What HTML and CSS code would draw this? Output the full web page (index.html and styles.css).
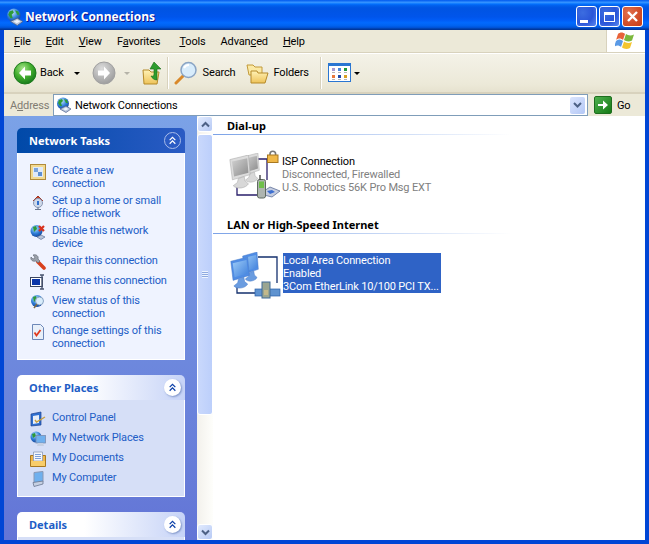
FILE: index.html
```html
<!DOCTYPE html>
<html lang="en">
<head>
  <meta charset="UTF-8">
  <title>Network Connections</title>
  <link rel="stylesheet" href="styles.css">
</head>
<body>
  <svg class="defs" width="0" height="0">
    <defs>
      <radialGradient id="gGreen" cx="40%" cy="30%" r="75%"><stop offset="0" stop-color="#a6e58a"/><stop offset=".5" stop-color="#45b02f"/><stop offset="1" stop-color="#13761a"/></radialGradient>
      <radialGradient id="gGrey" cx="40%" cy="30%" r="75%"><stop offset="0" stop-color="#dcdcdc"/><stop offset="1" stop-color="#9a9a9a"/></radialGradient>
      <radialGradient id="gGlobe" cx="40%" cy="30%" r="75%"><stop offset="0" stop-color="#bfe3ff"/><stop offset=".55" stop-color="#2f7fd8"/><stop offset="1" stop-color="#123f95"/></radialGradient>
      <linearGradient id="gFolder" x1="0" y1="0" x2="0" y2="1"><stop offset="0" stop-color="#fff2b5"/><stop offset="1" stop-color="#eec35a"/></linearGradient>
      <linearGradient id="gScreenBlue" x1="0" y1="0" x2="1" y2="1"><stop offset="0" stop-color="#9ccbf7"/><stop offset="1" stop-color="#3f80dc"/></linearGradient>
      <linearGradient id="gScreenGrey" x1="0" y1="0" x2="1" y2="1"><stop offset="0" stop-color="#d2d2d2"/><stop offset="1" stop-color="#8c8c8c"/></linearGradient>
      <symbol id="netGlobe" viewBox="0 0 16 16">
        <circle cx="7" cy="6.500" r="6" fill="url(#gGlobe)"/>
        <path d="M3 3l3-1 1 2-2 2 1 3-2 0-2-3z M8 2l3 1 1 3-2 0-1-2z" fill="#2d9a38"/>
        <path d="M4 12l6-3 5 3-5 3.500z" fill="#b9c6dc" stroke="#4a5f8c" stroke-width=".7"/>
        <path d="M7 12l3-1.500 2.500 1.500-3 1.500z" fill="#eef3fb"/>
      </symbol>
      <symbol id="monitorGrey" viewBox="0 0 26 26" preserveAspectRatio="none">
        <path d="M1 3.500L23 0l2 15-21 4z" fill="#dcdcdc" stroke="#a8a8a8" stroke-width=".5"/>
        <path d="M3.500 5L21.500 2.500 23 13.500 6 16.500z" fill="url(#gScreenGrey)"/>
        <path d="M11 18l7-1.500 1 3.500 4 2c-3 3.500-14 4.500-18 1.500l5-2.500z" fill="#d8d8d8" stroke="#a8a8a8" stroke-width=".5"/>
      </symbol>
      <symbol id="monitorBlue" viewBox="0 0 26 26" preserveAspectRatio="none">
        <path d="M1 3.500L23 0l2 15-21 4z" fill="#4f8ce4" stroke="#4a7cc8" stroke-width=".5"/>
        <path d="M3.500 5L21.500 2.500 23 13.500 6 16.500z" fill="url(#gScreenBlue)"/>
        <path d="M11 18l7-1.500 1 3.500 4 2c-3 3.500-14 4.500-18 1.500l5-2.500z" fill="#6a9ce0" stroke="#4a7cc8" stroke-width=".5"/>
      </symbol>
      <symbol id="chevrons" viewBox="0 0 16 16">
        <path d="M4.500 7.500L8 4l3.500 3.500M4.500 12L8 8.500l3.500 3.500" fill="none" stroke="currentColor" stroke-width="1.500"/>
      </symbol>
    </defs>
  </svg>

  <div class="window">
    <header class="titlebar">
      <svg class="title-icon" width="18" height="18"><use href="#netGlobe"/></svg>
      <span class="title-text">Network Connections</span>
      <div class="caption-btns">
        <button class="cap cap-min"><span class="min-bar"></span></button>
        <button class="cap cap-max"><span class="max-box"></span></button>
        <button class="cap cap-close">
          <svg width="13" height="13" viewBox="0 0 13 13"><path d="M2 2l9 9M11 2l-9 9" stroke="#fff" stroke-width="2.400"/></svg>
        </button>
      </div>
    </header>

    <div class="frame">
      <nav class="menubar">
        <div class="menu-items">
          <span><u>F</u>ile</span>
          <span><u>E</u>dit</span>
          <span><u>V</u>iew</span>
          <span class="menu-fav">F<u>a</u>vorites</span>
          <span><u>T</u>ools</span>
          <span>Advan<u>c</u>ed</span>
          <span><u>H</u>elp</span>
        </div>
        <div class="logo-box">
          <svg width="22" height="20" viewBox="0 0 22 20">
            <path d="M3 3c2-2 5-2 7 0l-2 6c-2-2-5-2-7 0z" fill="#e8633a"/>
            <path d="M11 3c2 1.500 5 2 8 .5l-2 6c-3 1.500-6 1-8-.5z" fill="#7cb83c"/>
            <path d="M1 10c2-2 4-2 7 0l-2 6c-2-2-5-2-7 0z" fill="#5a9ae6"/>
            <path d="M9 10.500c2 1.500 5 2 8 .5l-2 6c-3 1.500-6 1-8-.5z" fill="#f5c52e"/>
          </svg>
        </div>
      </nav>

      <div class="toolbar">
        <svg class="tb-round" width="24" height="24" viewBox="0 0 24 24">
          <circle cx="12" cy="12" r="11" fill="url(#gGreen)" stroke="#1c7a1c"/>
          <path d="M12 5.500L6 12l6 6.500v-4h6v-5h-6z" fill="#fff"/>
        </svg>
        <span class="tb-label back-label">Back</span>
        <span class="caret back-caret"></span>
        <svg class="tb-round fwd" width="24" height="24" viewBox="0 0 24 24">
          <circle cx="12" cy="12" r="11" fill="url(#gGrey)" stroke="#a0a0a0"/>
          <path d="M12 5.500l6 6.500-6 6.500v-4H6v-5h6z" fill="#fff"/>
        </svg>
        <span class="caret caret-off fwd-caret"></span>
        <svg class="up-icon" width="22" height="24" viewBox="0 0 22 24">
          <path d="M1 9h6l2 2h8l-2 12H2z" fill="url(#gFolder)" stroke="#b58a2a"/>
          <path d="M12 1l7 7h-4v11c-3 0-5-2-6-4 2 .5 3 0 3-2V8H8z" fill="#2e9c2e" stroke="#1a6d1a" stroke-width=".6"/>
        </svg>
        <span class="tb-sep sep-a"></span>
        <svg class="search-icon" width="24" height="24" viewBox="0 0 24 24">
          <path d="M9 15l-7 7" stroke="#d9892a" stroke-width="3" stroke-linecap="round"/>
          <circle cx="14.500" cy="9" r="7.500" fill="#d8ecfb" stroke="#8aa4c4" stroke-width="1.500"/>
          <path d="M10 7c1-2 3-3 5-3" stroke="#fff" stroke-width="2" fill="none"/>
        </svg>
        <span class="tb-label search-label">Search</span>
        <svg class="folders-icon" width="23" height="22" viewBox="0 0 23 22">
          <path d="M1 3h6l2 2h7v8H3z" fill="#fbe9a4" stroke="#c29a3a"/>
          <path d="M5 9h6l1 2h10l-3 10H5z" fill="url(#gFolder)" stroke="#b58a2a"/>
        </svg>
        <span class="tb-label">Folders</span>
        <span class="tb-sep sep-b"></span>
        <svg class="views-icon" width="24" height="20" viewBox="0 0 24 20">
          <rect x=".5" y=".5" width="22" height="18" fill="#fff" stroke="#2a76d2"/>
          <rect x="1" y="1" width="21" height="2" fill="#2a76d2"/>
          <path d="M4 5h3v3H4z" fill="#a79ad0"/><path d="M10 5h3v3h-3z" fill="#4a86d8"/><path d="M16 5h3v3h-3z" fill="#1f9a3a"/>
          <path d="M4 12h3v3H4z" fill="#e8783a"/><path d="M10 12h3v3h-3z" fill="#1e4aa8"/><path d="M16 12h3v3h-3z" fill="#d8a020"/>
          <path d="M4 9.500h3M10 9.500h3M16 9.500h3M4 16.500h3M10 16.500h3M16 16.500h3" stroke="#b5b5b5"/>
        </svg>
        <span class="caret views-caret"></span>
      </div>

      <div class="addressbar">
        <span class="addr-label">A<u>d</u>dress</span>
        <div class="addr-box">
          <svg width="16" height="16"><use href="#netGlobe"/></svg>
          <span class="addr-text">Network Connections</span>
          <span class="combo-btn">
            <svg width="9" height="7" viewBox="0 0 9 7"><path d="M1 1l3.500 3.500L8 1" fill="none" stroke="#4d6185" stroke-width="2"/></svg>
          </span>
        </div>
        <span class="go-btn">
          <svg width="12" height="12" viewBox="0 0 12 12"><path d="M1 5h5V1.500L11 6l-5 4.500V7H1z" fill="#fff"/></svg>
        </span>
        <span class="go-label">Go</span>
      </div>

      <div class="main">
        <aside class="sidebar">
          <section class="pane pane-primary">
            <div class="pane-head">
              <span>Network Tasks</span>
              <span class="collapse"><svg width="16" height="16"><use href="#chevrons"/></svg></span>
            </div>
            <ul class="pane-body">
              <li><svg width="16" height="16" viewBox="0 0 16 16"><rect x=".5" y=".5" width="15" height="15" fill="#f2d98f" stroke="#b08a3c"/><rect x="3" y="3" width="10" height="10" fill="#dfe9f8"/><path d="M4 4h4v4H4z" fill="#7ba4dc"/><path d="M8 8h4v4H8z" fill="#5f8fd0"/></svg><a>Create a new<br>connection</a></li>
              <li><svg width="16" height="16" viewBox="0 0 16 16"><path d="M3 7l5-5 5 5" fill="#c8452c" stroke="#a03420"/><circle cx="8" cy="9" r="4.500" fill="#cfd9ea" stroke="#8a98b4"/><path d="M7 7h2v4H7z" fill="#2f6fd0"/><path d="M8 13.500v1.500M5 15.500h6" stroke="#6b7890" stroke-width="1.200"/></svg><a>Set up a home or small<br>office network</a></li>
              <li><svg width="16" height="16" viewBox="0 0 16 16"><circle cx="6.500" cy="7" r="6" fill="url(#gGlobe)"/><path d="M3 3l3-1 1 3-3 3z" fill="#2d9a38"/><path d="M7 13l4-2 4 2-4 2.500z" fill="#b9c6dc" stroke="#4a5f8c" stroke-width=".6"/><path d="M9 2l5 5M14 2L9 7" stroke="#d8321e" stroke-width="2.200"/></svg><a>Disable this network<br>device</a></li>
              <li><svg width="16" height="16" viewBox="0 0 16 16"><path d="M8 8l6 6" stroke="#d8401e" stroke-width="3.600" stroke-linecap="round"/><path d="M1 3l2 2 2-1-1-2-1-1c3-1 6 1 5 4l2 2-2 2-2-2C3 8 0 6 1 3z" fill="#9aa0aa" stroke="#5e636e" stroke-width=".6"/></svg><a>Repair this connection</a></li>
              <li><svg width="16" height="16" viewBox="0 0 16 16"><rect x=".5" y="3.500" width="12" height="9" fill="#fff" stroke="#3a4560"/><rect x="2" y="5" width="8" height="6" fill="#0a35a8"/><path d="M12 1v14M10 1h4M10 15h4" stroke="#4a5570" stroke-width="1.400"/></svg><a>Rename this connection</a></li>
              <li><svg width="16" height="16" viewBox="0 0 16 16"><circle cx="7" cy="7" r="6" fill="url(#gGlobe)"/><path d="M3 3l3-1 1 3-3 3z" fill="#2d9a38"/><circle cx="9.500" cy="7" r="4" fill="#d8ecfb" stroke="#8aa4c4"/><path d="M7 10l-3 4" stroke="#7a6a4a" stroke-width="1.600"/></svg><a>View status of this<br>connection</a></li>
              <li><svg width="16" height="16" viewBox="0 0 16 16"><path d="M2.500 .5h8l3 3v12h-11z" fill="#e8eff9" stroke="#6c87b8"/><path d="M4.500 8.500l2 3 4-5.500" fill="none" stroke="#e03a1e" stroke-width="1.800"/></svg><a>Change settings of this<br>connection</a></li>
            </ul>
          </section>

          <section class="pane">
            <div class="pane-head">
              <span>Other Places</span>
              <span class="collapse"><svg width="16" height="16"><use href="#chevrons"/></svg></span>
            </div>
            <ul class="pane-body">
              <li><svg width="16" height="16" viewBox="0 0 16 16"><path d="M1 3l10-2v13l-10 1z" fill="#2f6fd0" stroke="#1c3f8c" stroke-width=".7"/><path d="M3 5l6-1v8l-6 1z" fill="#e8eef8"/><path d="M5 9l1.500 2L15 6" fill="none" stroke="#c8a040" stroke-width="1.400"/></svg><a>Control Panel</a></li>
              <li><svg width="16" height="16" viewBox="0 0 16 16"><circle cx="6" cy="6" r="5.500" fill="url(#gGlobe)"/><path d="M2 3l3-1 1 3-3 2z" fill="#2d9a38"/><rect x="6" y="4.500" width="9.500" height="7.500" fill="#6fb0ee" stroke="#7a8db0" stroke-width=".8"/><path d="M8 12h5l1 3H7z" fill="#c6d0e2"/></svg><a>My Network Places</a></li>
              <li><svg width="16" height="16" viewBox="0 0 16 16"><path d="M.5 4.500h15v11H.5z" fill="#efb64a" stroke="#a87820"/><path d="M3.500 1h9v9h-9z" fill="#f4f7fc" stroke="#8a9ab8" stroke-width=".8"/><path d="M5 3.500h6M5 5.500h6M5 7.500h6" stroke="#7ea0d8"/><path d="M1 10h14v5H1z" fill="#f8cd6a"/></svg><a>My Documents</a></li>
              <li><svg width="16" height="16" viewBox="0 0 16 16"><path d="M4 1.500l9-1v10l-9 1.500z" fill="#6fb0ee" stroke="#8a98b4"/><path d="M3 11.500l10-1.500v3l-9 2.500z" fill="#c6d0e2" stroke="#6a7690" stroke-width=".8"/></svg><a>My Computer</a></li>
            </ul>
          </section>

          <section class="pane">
            <div class="pane-head">
              <span>Details</span>
              <span class="collapse"><svg width="16" height="16"><use href="#chevrons"/></svg></span>
            </div>
            <div class="pane-body pane-stub"></div>
          </section>
        </aside>

        <div class="scrollbar">
          <span class="sb-btn">
            <svg width="9" height="7" viewBox="0 0 9 7"><path d="M1 5.500L4.500 2 8 5.500" fill="none" stroke="#4d6185" stroke-width="2"/></svg>
          </span>
          <span class="sb-thumb"><span class="grip"></span></span>
          <span class="sb-track"></span>
          <span class="sb-btn">
            <svg width="9" height="7" viewBox="0 0 9 7"><path d="M1 1.500L4.500 5 8 1.500" fill="none" stroke="#4d6185" stroke-width="2"/></svg>
          </span>
        </div>

        <main class="content">
          <h2 class="group-title first">Dial-up</h2>
          <div class="conn">
            <svg class="conn-icon" width="52" height="50" viewBox="0 0 52 50">
              <path d="M29 9h9v21M8 35v10h22" fill="none" stroke="#2a1f6b" stroke-width="1.300"/>
              <use href="#monitorGrey" x="13" y="3" width="18" height="30"/>
              <use href="#monitorGrey" x="0" y="5" width="22" height="34"/>
              <path d="M41 5V4a2.800 2.800 0 0 1 5.600 0v1" fill="none" stroke="#777" stroke-width="1.600"/>
              <rect x="38.500" y="5" width="10.500" height="7.500" fill="#f0b848" stroke="#a87820"/>
              <path d="M35 41l6-4 10 4-8 6-8-2z" fill="#c5cde0" stroke="#4a5f8c" stroke-width=".7"/>
              <path d="M38 41l5-1 3 2-5 2z" fill="#3d6fd0"/>
              <rect x="28.500" y="29.500" width="8" height="18.500" rx="2" fill="#aeb5b0" stroke="#5f6a60"/>
              <rect x="30" y="31.500" width="5" height="6.500" fill="#6fc04a"/>
              <path d="M31 25v5" stroke="#444" stroke-width="1.400"/>
            </svg>
            <div class="conn-text">
              <div>ISP Connection</div>
              <div class="muted">Disconnected, Firewalled</div>
              <div class="muted">U.S. Robotics 56K Pro Msg EXT</div>
            </div>
          </div>

          <h2 class="group-title">LAN or High-Speed Internet</h2>
          <div class="conn conn-lan">
            <svg class="conn-icon" width="52" height="50" viewBox="0 0 52 50">
              <path d="M29 8h19v26M8 36v8h26" fill="none" stroke="#14306e" stroke-width="1.300"/>
              <use href="#monitorBlue" x="13" y="3" width="17" height="30"/>
              <use href="#monitorBlue" x="1" y="8" width="20" height="32"/>
              <rect x="26" y="40" width="25" height="7" fill="#5f93d0" stroke="#2a5ea8" stroke-width=".7"/>
              <rect x="33" y="33" width="8" height="16" fill="#9aa590" stroke="#3f6a98"/>
              <rect x="35" y="41" width="4" height="5" fill="#c2b88a"/>
            </svg>
            <div class="conn-text selected">
              <div>Local Area Connection</div>
              <div>Enabled</div>
              <div>3Com EtherLink 10/100 PCI TX...</div>
            </div>
          </div>
        </main>
      </div>
    </div>
  </div>
</body>
</html>
```

FILE: styles.css
```css
* {
  box-sizing: border-box;
}
html, body {
  margin: 0;
  padding: 0;
}
body {
  width: 649px;
  height: 544px;
  overflow: hidden;
  font-family: Roboto, Arial, sans-serif;
  font-size: 11px;
  letter-spacing: -.15px;
  color: #000;
}
svg {
  display: block;
  flex: none;
}
.defs {
  height: 0;
}
u {
  text-underline-offset: 1px;
}
ul {
  list-style: none;
  margin: 0;
}

.window {
  width: 649px;
  height: 544px;
  display: flex;
  flex-direction: column;
  background: #0046d5;
}

/* title bar */
.titlebar {
  height: 30px;
  flex: none;
  display: flex;
  align-items: center;
  padding: 3px 4px 0 6px;
  color: #fff;
  background: linear-gradient(180deg, #0058ee 0, #3593ff 8%, #127dff 12%, #036ffc 14%, #0262ee 18%, #0057e5 24%, #0054e3 30%, #0055eb 56%, #005bf5 66%, #026afe 76%, #0062ef 86%, #0052d6 92%, #0040ab 96%, #003092 100%);
}
.title-icon {
  margin-right: 1px;
}
.title-text {
  font-family: "Open Sans", Arial, sans-serif;
  font-size: 12px;
  font-weight: 700;
  letter-spacing: 0;
  text-shadow: 1px 1px 0 #0f1089;
}
.caption-btns {
  margin-left: auto;
  display: flex;
  gap: 2px;
  margin-right: 2px;
}
.cap {
  width: 21px;
  height: 21px;
  padding: 0;
  border: 1px solid #fff;
  border-radius: 3px;
  display: flex;
  align-items: center;
  justify-content: center;
  background: radial-gradient(circle at 30% 30%, #3c6de0, #2a55d8 55%, #5a88f0);
}
.cap-close {
  background: radial-gradient(circle at 30% 30%, #e0714f, #d24f2b 55%, #c83c15);
}
.min-bar {
  width: 8px;
  height: 3px;
  background: #fff;
  margin: 9px 5px 0 0;
}
.max-box {
  width: 11px;
  height: 10px;
  border: 1px solid #fff;
  border-top-width: 3px;
}

/* everything under the title bar */
.frame {
  flex: 1;
  min-height: 0;
  margin: 0 4px 4px;
  display: flex;
  flex-direction: column;
  background: #ece9d8;
}

.menubar {
  height: 23px;
  flex: none;
  display: flex;
  justify-content: space-between;
  border-bottom: 1px solid #d8d2bd;
}
.menu-items {
  display: flex;
  align-items: center;
  gap: 15px;
  padding-left: 10px;
}
.menu-fav {
  margin-right: 4px;
}
.logo-box {
  width: 39px;
  display: flex;
  align-items: center;
  justify-content: center;
  background: #fff;
  border-left: 1px solid #d8d2bd;
}

.toolbar {
  height: 41px;
  flex: none;
  display: flex;
  align-items: center;
  padding-left: 9px;
  border-top: 1px solid #fff;
  border-bottom: 2px solid #d8d2bd;
  background: linear-gradient(180deg, #f4f2e8, #ece9d8 80%, #e6e2cf);
}
.tb-label {
  line-height: 14px;
}
.back-label {
  margin-left: 3px;
}
.caret {
  width: 0;
  height: 0;
  border: 3px solid transparent;
  border-top: 3px solid #000;
  border-bottom: 0;
}
.caret-off {
  border-top-color: #b5b3a8;
}
.back-caret {
  margin-left: 10px;
}
.fwd {
  margin-left: 12px;
}
.fwd-caret {
  margin-left: 8px;
}
.up-icon {
  margin-left: 12px;
}
.tb-sep {
  width: 1px;
  height: 32px;
  background: #d8d2bd;
  box-shadow: 1px 0 0 #fff;
}
.sep-a {
  margin: 0 6px 0 3px;
}
.search-icon {
  margin-right: 5px;
}
.search-label {
  margin-right: 11px;
}
.folders-icon {
  margin-right: 4px;
}
.sep-b {
  margin: 0 7px 0 11px;
}
.views-caret {
  margin-left: 2px;
}

.addressbar {
  height: 22px;
  flex: none;
  display: flex;
  align-items: center;
}
.addr-label {
  width: 49px;
  padding-left: 6px;
  color: #7f7c73;
}
.addr-box {
  width: 535px;
  height: 22px;
  display: flex;
  align-items: center;
  padding: 0 2px;
  gap: 3px;
  background: #fff;
  border: 1px solid #7f9db9;
}
.addr-text {
  flex: 1;
}
.combo-btn {
  width: 15px;
  height: 17px;
  display: flex;
  align-items: center;
  justify-content: center;
  border-radius: 2px;
  background: linear-gradient(135deg, #dbe5fd, #b4c8f6);
}
.go-btn {
  width: 18px;
  height: 18px;
  margin-left: 6px;
  display: flex;
  align-items: center;
  justify-content: center;
  border-radius: 2px;
  background: linear-gradient(135deg, #4fb04f, #157a15);
  border: 1px solid #1e6e1e;
}
.go-label {
  margin-left: 5px;
}

.main {
  flex: 1;
  min-height: 0;
  display: flex;
}

/* left task panes */
.sidebar {
  width: 193px;
  flex: none;
  padding: 12px 12px 0 13px;
  overflow: hidden;
  background: linear-gradient(180deg, #7ba2e7, #6375d6);
}
.pane {
  margin-bottom: 15px;
}
.pane-head {
  height: 25px;
  display: flex;
  align-items: center;
  justify-content: space-between;
  padding: 0 4px 0 12px;
  border-radius: 5px 5px 0 0;
  font-family: "Noto Sans", Arial, sans-serif;
  letter-spacing: 0;
  color: #215dc6;
  font-weight: 700;
  background: linear-gradient(90deg, #fff 40%, #c6d3f7);
}
.pane-primary .pane-head {
  color: #fff;
  background: linear-gradient(90deg, #0049a8, #2a5bc4);
}
.collapse {
  width: 17px;
  height: 17px;
  border-radius: 50%;
  display: flex;
  align-items: center;
  justify-content: center;
  color: #0a3fa8;
  background: #fff;
  box-shadow: 1px 1px 2px #7f95c8;
}
.collapse svg {
  width: 13px;
  height: 13px;
}
.pane-primary .collapse {
  color: #fff;
  background: #2a5bc4;
  border: 1px solid #a9bdea;
  box-shadow: none;
}
.pane-body {
  padding: 11px 10px 9px 12px;
  display: flex;
  flex-direction: column;
  gap: 4px;
  background: #d6dff7;
  border: 1px solid #fff;
  border-top: 0;
}
.pane-primary .pane-body {
  background: #eff3ff;
}
.pane-stub {
  height: 10px;
}
.pane-body li {
  display: flex;
  gap: 6px;
  align-items: flex-start;
  min-height: 16px;
  line-height: 13px;
  color: #215dc6;
}

/* scrollbar */
.scrollbar {
  width: 16px;
  flex: none;
  display: flex;
  flex-direction: column;
  background: linear-gradient(90deg, #f3f1ec, #fefefb);
}
.sb-btn {
  width: 16px;
  height: 16px;
  flex: none;
  display: flex;
  align-items: center;
  justify-content: center;
  border: 1px solid #fff;
  border-radius: 3px;
  background: linear-gradient(135deg, #e2ebfe, #b7caf5);
}
.sb-thumb {
  height: 281px;
  flex: none;
  margin-top: 2px;
  display: flex;
  align-items: center;
  justify-content: center;
  border: 1px solid #fff;
  border-radius: 3px;
  background: linear-gradient(90deg, #c9d8fc, #bccffb);
}
.grip {
  width: 6px;
  height: 7px;
  background: repeating-linear-gradient(180deg, #eef4fe 0 1px, #8faae0 1px 2px);
}
.sb-track {
  flex: 1;
}

/* connection list */
.content {
  flex: 1;
  min-width: 0;
  background: #fff;
}
.group-title {
  height: 17px;
  margin: 0;
  padding: 0 0 0 14px;
  font-family: "Noto Sans", Arial, sans-serif;
  font-size: 11px;
  font-weight: 700;
  letter-spacing: 0;
  line-height: 15px;
  border-bottom: 1px solid;
  border-image: linear-gradient(90deg, #7ba2e7, #fff 69%) 1;
}
.group-title.first {
  margin-top: 2px;
}
.conn {
  height: 82px;
  padding: 15px 0 0 16px;
  display: flex;
  gap: 1px;
}
.conn-lan {
  gap: 2px;
}
.conn-text {
  line-height: 13px;
  padding-top: 5px;
  white-space: nowrap;
}
.muted {
  color: #808080;
}
.selected {
  align-self: flex-start;
  width: 158px;
  height: 40px;
  margin-top: 4px;
  padding: 1px 0 0;
  color: #fff;
  background: #2f63c6;
}
```
